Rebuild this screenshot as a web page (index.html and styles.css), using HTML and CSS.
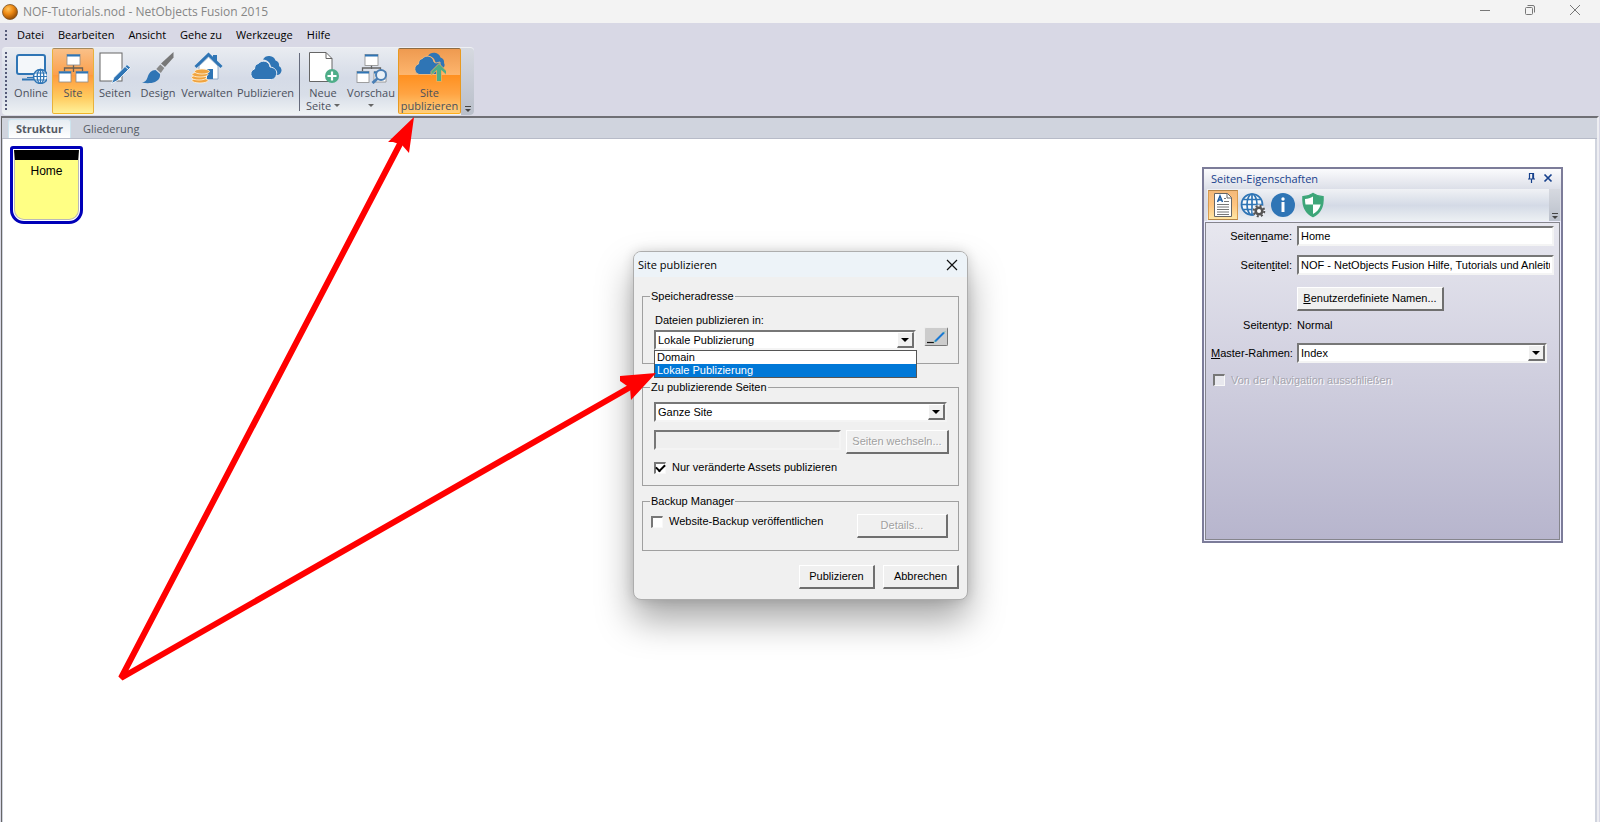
FILE: index.html
```html
<!DOCTYPE html>
<html lang="de">
<head>
<meta charset="utf-8">
<title>NOF-Tutorials.nod - NetObjects Fusion 2015</title>
<link rel="stylesheet" href="styles.css">
</head>
<body>
<div class="app">
  <header class="titlebar">
    <svg class="app-icon" width="16" height="16" viewBox="0 0 16 16"><defs><radialGradient id="orb" cx=".38" cy=".3" r=".75"><stop offset="0" stop-color="#ffc45c"/><stop offset=".45" stop-color="#ee8a14"/><stop offset="1" stop-color="#8a4300"/></radialGradient></defs><circle cx="8" cy="8" r="7.5" fill="url(#orb)" stroke="#7a5326" stroke-width=".8"/></svg>
    <h1 class="app-title">NOF-Tutorials.nod - NetObjects Fusion 2015</h1>
    <div class="window-controls">
      <button aria-label="Minimieren"><svg width="12" height="12" viewBox="0 0 12 12"><path d="M1 6.5h10"/></svg></button>
      <button aria-label="Wiederherstellen"><svg width="12" height="12" viewBox="0 0 12 12"><rect x="1.5" y="3.5" width="7" height="7" rx="1"/><path d="M3.500 1.500h5.500a1.500 1.500 0 0 1 1.500 1.500v5.500"/></svg></button>
      <button aria-label="Schließen"><svg width="12" height="12" viewBox="0 0 12 12"><path d="M1 1l10 10M11 1L1 11"/></svg></button>
    </div>
  </header>

  <nav class="menubar">
    <span class="grip grip-short"></span>
    <button>Datei</button><button>Bearbeiten</button><button>Ansicht</button><button>Gehe zu</button><button>Werkzeuge</button><button>Hilfe</button>
  </nav>

  <div class="toolbar">
    <span class="grip"></span>
    <button class="tool w-s">
      <svg width="32" height="32" viewBox="0 0 32 32"><rect x="2" y="3" width="28" height="19" rx="2" fill="#f4f7fa" stroke="#2f75b5" stroke-width="2"/><path d="M7 27.500h12" stroke="#2f75b5" stroke-width="2"/><path d="M12 25.500h8" stroke="#2f75b5" stroke-width="1"/><circle cx="25.500" cy="24.500" r="7" fill="#fff" stroke="#2f75b5" stroke-width="1.400"/><ellipse cx="25.500" cy="24.500" rx="3.300" ry="7" fill="none" stroke="#2f75b5" stroke-width="1.300"/><path d="M25.500 17.500v14M18.500 24.500h14M19.500 21h12M19.500 28h12" stroke="#2f75b5" stroke-width="1.200"/></svg>
      <span>Online</span></button>
    <button class="tool w-s active">
      <svg width="32" height="32" viewBox="0 0 32 32"><path d="M16.500 13v7M7.500 20v-4h18v4" fill="none" stroke="#6a6054" stroke-width="1.300"/><g fill="#fff" stroke="#8b8b8b" stroke-width=".8"><rect x="10" y="2.500" width="13" height="10.500"/><rect x="2" y="19.500" width="12" height="10.500"/><rect x="19" y="19.500" width="12" height="10.500"/></g><path d="M10 3.500h13M2 20.500h12M19 20.500h12" stroke="#2f75b5" stroke-width="2.200"/></svg>
      <span>Site</span></button>
    <button class="tool w-s">
      <svg width="32" height="32" viewBox="0 0 32 32"><rect x="1" y="1" width="22" height="28" fill="#fff" stroke="#666" stroke-width="1"/><path d="M12.500 31.500l2.500-6L28 12.500l3.500 3L18.500 28.500z" fill="#2f75b5" stroke="#fff" stroke-width=".8"/><path d="M26 14.500l3.500 3" stroke="#fff" stroke-width=".9"/></svg>
      <span>Seiten</span></button>
    <button class="tool w-m">
      <svg width="32" height="32" viewBox="0 0 32 32"><path d="M31.500 0v5.500L23 15l-4-3.500z" fill="#777"/><path d="M18.300 12.500l4 3.500-3.500 5-4.500-4z" fill="#888"/><path d="M13.500 18l4.500 4c.5 3.500-1.500 6.500-5 8-4 1.500-9 1.500-13 .5 3-.5 4.500-2 5.500-5 1.200-4.500 4-7.500 8-7.500z" fill="#2f75b5"/></svg>
      <span>Design</span></button>
    <button class="tool w-l">
      <svg width="32" height="32" viewBox="0 0 32 32"><path d="M22 3h4v8l-4-4z" fill="#2f75b5"/><path d="M8 14v13h19V14l-9.500-9z" fill="#fff" stroke="#7b9cc0" stroke-width=".8"/><path d="M4.500 15L17.500 2.500l13 12.500" fill="none" stroke="#2f75b5" stroke-width="3"/><path d="M16 17h6v10h-6z" fill="#2f75b5"/><g fill="#f0a440" stroke="#fff4df" stroke-width=".8"><ellipse cx="9" cy="28.500" rx="8" ry="2.500"/><ellipse cx="8" cy="25.500" rx="7.500" ry="2.500"/><ellipse cx="9" cy="22.500" rx="8" ry="2.500"/><ellipse cx="11" cy="19.500" rx="7.500" ry="2.500"/></g></svg>
      <span>Verwalten</span></button>
    <button class="tool w-xl">
      <svg width="32" height="32" viewBox="0 0 32 32"><path d="M27 23a4.800 4.800 0 0 0 2-9 5 5 0 0 0-3.500-5.500A7 7 0 0 0 13 7.500c5 .5 7.500 3.500 8 7.500 3.500 1 4.500 4.500 4 8z" fill="#2f75b5"/><path d="M5 27.500a5.500 5.500 0 0 1-.5-10.500c0-3 1.500-5 4-5.500 3-4 11-3 11.500 3.500 5 .5 7.500 4 6.500 7.500-.5 3-2.500 5-5 5z" fill="#2f75b5" stroke="#e8edf4" stroke-width="1"/></svg>
      <span>Publizieren</span></button>
    <span class="divider"></span>
    <button class="tool w-s">
      <svg width="32" height="32" viewBox="0 0 32 32"><path d="M2.500.5H19l6 6v23H2.500z" fill="#fff" stroke="#666"/><path d="M19 .5v6h6" fill="none" stroke="#666"/><circle cx="25" cy="24" r="7" fill="#4ead88"/><path d="M20.500 24h9M25 19.500v9" stroke="#fff" stroke-width="2.200"/></svg>
      <span>Neue<br>Seite <i class="caret"></i></span></button>
    <button class="tool w-l">
      <svg width="32" height="32" viewBox="0 0 32 32"><path d="M16.500 13v4M7.500 19v-3h18v3" fill="none" stroke="#666" stroke-width="1.300"/><g fill="#fff" stroke="#8b8b8b" stroke-width=".8"><rect x="10" y="2.500" width="13" height="11"/><rect x="2" y="19.500" width="12" height="11"/><path d="M19 30V19.500h12V30z"/></g><path d="M10 3.500h13M2 20.500h12M19 20.500h12" stroke="#2f75b5" stroke-width="2.200"/><circle cx="26" cy="23" r="5" fill="#eaf1f8" stroke="#4b7fb5" stroke-width="2"/><path d="M22.500 26.500l-5 4.500" stroke="#4b7fb5" stroke-width="3"/></svg>
      <span>Vorschau<br><i class="caret"></i></span></button>
    <button class="tool w-xl active hot">
      <svg width="32" height="32" viewBox="0 0 32 32"><path d="M27 17a4 4 0 0 0 3-6 5 5 0 0 0-3.500-5.500A7 7 0 0 0 14 4c4.500 0 7 3 7.500 7z" fill="#2f75b5"/><path d="M5 22.500A5.500 5.500 0 0 1 4.500 12c0-3 1.500-5 4-5.500 3-4 10.500-3 11.500 3.500l2 1 4-1v12.500z" fill="#2f75b5" stroke="#ffc27f" stroke-width=".8"/><path d="M17 19.500l8-8 8 8v4l-5.500-5V29.500h-5V18.500l-5.500 5z" fill="#4ead88" stroke="#ffad55" stroke-width=".8"/></svg>
      <span>Site<br>publizieren</span></button>
    <button class="overflow" aria-label="Symbolleistenoptionen"><svg width="8" height="8" viewBox="0 0 8 8"><path d="M1 1.500h6" stroke="#444"/><path d="M1 4h6L4 7z" fill="#444"/></svg></button>
  </div>

  <main class="workspace">
    <div class="tabs" role="tablist">
      <button role="tab" aria-selected="true" class="tab selected">Struktur</button>
      <button role="tab" aria-selected="false" class="tab">Gliederung</button>
    </div>
    <div class="canvas">
      <div class="node"><div class="node-body">Home</div></div>
    </div>
  </main>

  <section class="panel">
    <header class="panel-title">
      <h2>Seiten-Eigenschaften</h2>
      <button aria-label="Anheften"><svg width="9" height="10" viewBox="0 0 9 10"><path d="M2.500 5.500v-5h4v5M1 6h7M4.500 6v4M5.800 1v5" fill="none" stroke="#17418c" stroke-width="1.200"/></svg></button>
      <button aria-label="Schließen"><svg width="10" height="10" viewBox="0 0 10 10"><path d="M1.500 1.500l7 7M8.500 1.500l-7 7" stroke="#17418c" stroke-width="1.700"/></svg></button>
    </header>
    <div class="panel-tools">
      <button class="ptool active" aria-label="Seite"><svg width="24" height="26" viewBox="0 0 24 26"><path d="M3.500 1.500h13l4 4v19h-17z" fill="#fff" stroke="#666"/><path d="M16 1.500v4.500h4.500" fill="none" stroke="#666"/><path d="M6.500 10L9 4l2.500 6M7.500 8h3" fill="none" stroke="#1f5c9f" stroke-width="1.500"/><path d="M13 6.500h2M13 9.500h5M6 12.500h12M6 15h12M6 17.500h12M6 20h12M6 22.500h12" stroke="#777"/></svg></button>
      <button class="ptool" aria-label="Web"><svg width="26" height="26" viewBox="0 0 26 26"><g fill="none" stroke="#2f75b5" stroke-width="1.700"><circle cx="12" cy="12.500" r="10.500" fill="#f8fafc"/><ellipse cx="12" cy="12.500" rx="5" ry="10.500"/><path d="M12 2v21M1.500 12.500h21M3.500 7.500h17M3.500 17.500h17"/></g><circle cx="19" cy="19" r="6.500" fill="#edf1f7"/><circle cx="19" cy="19" r="3.300" fill="#fff" stroke="#555" stroke-width="2.600"/><circle cx="19" cy="19" r="5.300" fill="none" stroke="#555" stroke-width="2" stroke-dasharray="2.080 2.080"/></svg></button>
      <button class="ptool" aria-label="Info"><svg width="26" height="26" viewBox="0 0 26 26"><circle cx="13" cy="13" r="12" fill="#2f75b5"/><circle cx="13" cy="7" r="1.700" fill="#fff"/><path d="M13 10v10" stroke="#fff" stroke-width="3"/></svg></button>
      <button class="ptool" aria-label="Sicherheit"><svg width="26" height="26" viewBox="0 0 26 26"><path d="M13 1.500c3 2 6.500 3 10 3.300C23.500 14 20.500 21 13 24.500 5.500 21 2.500 14 3 4.800 6.500 4.500 10 3.500 13 1.500z" fill="#3da679" stroke="#3da679" stroke-width="1.500"/><path d="M13 4.500v8H5.500c-.4-2-.5-3.500-.5-5.500C8 6.800 10.500 6 13 4.500zM13 12.500h7.700c-1.200 4.500-3.800 7.500-7.700 9.500z" fill="#fff"/></svg></button>
      <span class="overflow panel-overflow"><svg width="8" height="8" viewBox="0 0 8 8"><path d="M1 1.500h6" stroke="#444"/><path d="M1 4h6L4 7z" fill="#444"/></svg></span>
    </div>
    <form class="panel-body">
      <label for="pname">Seiten<u>n</u>ame:</label><input id="pname" class="field" type="text" value="Home">
      <label for="ptitle">Seiten<u>t</u>itel:</label><input id="ptitle" class="field" type="text" value="NOF - NetObjects Fusion Hilfe, Tutorials und Anleitungen">
      <button type="button" class="btn names"><span><u>B</u>enutzerdefiniete Namen...</span></button>
      <span class="key">Seitentyp:</span><span>Normal</span>
      <label for="master"><u>M</u>aster-Rahmen:</label>
      <div class="combo master"><select id="master"><option>Index</option></select><i class="drop"></i></div>
      <label class="check nav-check disabled"><input type="checkbox" disabled>Von der Navigation ausschließen</label>
    </form>
  </section>

  <section class="dialog" role="dialog" aria-labelledby="dlg">
    <header class="dialog-title"><h2 id="dlg">Site publizieren</h2>
      <button aria-label="Schließen"><svg width="12" height="12" viewBox="0 0 12 12"><path d="M1 1l10 10M11 1L1 11" stroke="#111" stroke-width="1.200"/></svg></button></header>
    <form class="dialog-body">
      <fieldset class="group address">
        <legend>Speicheradresse</legend>
        <label for="target">Dateien publizieren in:</label>
        <div class="row">
          <div class="combo target"><select id="target"><option>Domain</option><option selected>Lokale Publizierung</option></select><i class="drop"></i>
            <ul class="options" role="listbox"><li role="option">Domain</li><li role="option" aria-selected="true">Lokale Publizierung</li></ul></div>
          <button type="button" class="edit" aria-label="Bearbeiten"><svg width="22" height="16" viewBox="0 0 22 16"><path d="M2 13.500h7" stroke="#111" stroke-width="1.200"/><path d="M10 12.500l9-9" stroke="#1878d4" stroke-width="2"/><path d="M9 13.500l2-2M18.500 4l1.500-1.500" stroke="#4ab3a5"/></svg></button>
        </div>
      </fieldset>
      <fieldset class="group pages">
        <legend>Zu publizierende Seiten</legend>
        <div class="combo"><select aria-label="Zu publizierende Seiten"><option>Ganze Site</option></select><i class="drop"></i></div>
        <div class="row switch"><input class="field" type="text" disabled aria-label="Seiten"><button type="button" class="btn" disabled>Seiten wechseln...</button></div>
        <label class="check"><input type="checkbox" checked>Nur veränderte Assets publizieren</label>
      </fieldset>
      <fieldset class="group backup">
        <legend>Backup Manager</legend>
        <div class="row">
        <label class="check"><input type="checkbox">Website-Backup veröffentlichen</label>
        <button type="button" class="btn details" disabled>Details...</button></div>
      </fieldset>
      <div class="actions"><button type="button" class="btn">Publizieren</button><button type="button" class="btn">Abbrechen</button></div>
    </form>
  </section>

  <svg class="arrows" width="1600" height="822" viewBox="0 0 1600 822"><path d="M401 142L121 678L634 385" fill="none" stroke="#f00" stroke-width="6" stroke-linejoin="bevel"/><path d="M414 117L409 153L402 145L393 142L388 142zM656 373L631 400L630 388L620 381L620 376z" fill="#f00"/></svg>
</div>
</body>
</html>
```

FILE: styles.css
```css
* { box-sizing: border-box; }
body { margin: 0; }
button { font: inherit; color: inherit; background: none; border: 0; padding: 0; margin: 0; }
h1, h2 { margin: 0; font-weight: 400; }
svg { display: block; flex: none; }

.app {
  position: relative;
  display: flex;
  flex-direction: column;
  height: 100vh;
  overflow: hidden;
  background: #d8d8e5;
  color: #000;
  font: 11px/13px "Liberation Sans", Arial, sans-serif;
}

/* Title bar and menu */
.titlebar { display: flex; align-items: center; height: 23px; padding-left: 2px; background: #f3f3f3; }
.app-title { flex: 1; margin-left: 5px; color: #868686; font: 12px/16px "Open Sans", sans-serif; }
.window-controls { display: flex; align-self: flex-start; }
.window-controls button { width: 45px; height: 20px; display: grid; place-items: center; }
.window-controls button:last-child { margin-right: 3px; }
.window-controls svg { fill: none; stroke: #777; }
.menubar { display: flex; align-items: center; height: 24px; padding-left: 5px; font: 11px/16px "Open Sans", sans-serif; }
.menubar button { margin-right: 14px; white-space: nowrap; }
.grip { width: 2px; height: 60px; background: repeating-linear-gradient(#555a78 0 2px, transparent 2px 4px); flex: none; margin-right: 3px; }
.grip-short { height: 10px; margin-right: 10px; }

/* Main toolbar */
.toolbar {
  display: flex;
  align-items: center;
  align-self: flex-start;
  height: 68px;
  margin-left: 2px;
  padding-left: 3px;
  background: linear-gradient(#e9ecf1, #d5dbe7 45%, #d8dee8 70%, #f0f3f5);
  border-top: 1px solid #eef0f4;
  border-radius: 4px;
}
.tool {
  display: flex;
  flex-direction: column;
  align-items: center;
  align-self: stretch;
  margin: 0 0 1px;
  padding-top: 3px;
  border: 1px solid transparent;
  border-radius: 2px;
  color: #4b505c;
  font: 11px/13px "Open Sans", sans-serif;
  white-space: nowrap;
}
.tool span { margin-top: 2px; }
.w-s { width: 42px; }
.w-m { width: 44px; }
.w-l { width: 54px; }
.w-xl { width: 63px; }
.active { background: linear-gradient(#f9c088, #fca04c 40%, #ff9a3d 41%, #ffca5e 75%, #fff29a); border-color: #a58a5d #e8b23c #f0b428; }
.hot { background: linear-gradient(#ee9a50, #fdb56d 40%, #ff9020 41%, #ffa443 70%, #ffcf7c); border-color: #8d6c45 #e89a20 #ffae1c; }
.divider { width: 1px; height: 58px; margin: 0 2px; background: #666b7c; }
.caret { display: inline-block; border: 3px solid transparent; border-top-color: #666; border-bottom: 0; vertical-align: 3px; }
.overflow { align-self: stretch; display: flex; align-items: flex-end; justify-content: center; width: 13px; padding-bottom: 2px; background: linear-gradient(#d6d9e0, #b9bfca); border-radius: 0 4px 4px 0; }

/* Document area */
.workspace { flex: 1; display: flex; flex-direction: column; margin: 1px 1px 0 1px; background: #d0d4de; border: 1px solid #666; border-width: 2px 2px 0 1px; border-color: #6f6f75 #eeeef2 #666 #666; }
.tabs { display: flex; align-items: flex-end; height: 21px; padding-left: 6px; color: #555a64; font: 11px/18px "Open Sans", sans-serif; border-bottom: 1px solid #b7bbc8; }
.tab { padding: 0 12px; }
.selected { padding: 0 7px; background: linear-gradient(#e6ecf2, #fff); border: 1px solid #cde4ee; border-bottom: 0; border-radius: 3px 3px 0 0; font-weight: 700; }
.canvas { flex: 1; padding: 7px; margin: 0 2px 0 1px; background: #fff; }
.node { width: 73px; height: 78px; padding: 1px; border: 3px solid #0000b8; border-radius: 3px 3px 14px 14px; }
.node-body { height: 100%; border: 1px solid #b9b9b9; border-top: 10px solid #000; border-radius: 0 0 10px 10px; background: #ffff84; text-align: center; font: 12px/22px "Liberation Sans", sans-serif; }

/* Classic 3D controls */
.field { min-width: 0; height: 20px; padding: 0 2px; border: 2px solid; border-color: #777 #f4f4f4 #f4f4f4 #777; border-radius: 0; background: #fff; font: inherit; color: #000; }
.field:disabled { background: #efefef; }
.btn { height: 24px; background: #f0f0f0; border: 1px solid; border-width: 1px 2px 2px 1px; border-color: #fff #6f6f6f #6f6f6f #fff; }
.btn:disabled { color: #a0a0a0; text-shadow: 1px 1px #fff; }
.combo { position: relative; height: 20px; border: 2px solid; border-color: #777 #f4f4f4 #f4f4f4 #777; background: #fff; }
.combo select { appearance: none; width: 100%; height: 100%; display: block; border: 0; padding: 0 2px; background: transparent; font: inherit; color: #000; }
.drop { position: absolute; top: 0; right: 0; bottom: 0; width: 17px; background: #f0f0f0; border: 1px solid; border-width: 1px 2px 2px 1px; border-color: #fff #707070 #707070 #fff; display: grid; place-items: center; pointer-events: none; }
.drop::after { content: ""; border: 4px solid transparent; border-top-color: #000; border-bottom: 0; }
.check { display: flex; align-items: center; gap: 6px; height: 13px; white-space: nowrap; }
.check input { appearance: none; width: 12px; height: 12px; margin: 0; background: #fff; border: 1px solid; border-width: 2px 1px 1px 2px; border-color: #777 #f8f8f8 #f8f8f8 #777; display: grid; place-items: center; }
.check input:checked::after { content: ""; width: 7px; height: 4px; border: solid #000; border-width: 0 0 2px 2px; transform: rotate(-45deg); margin-bottom: 3px; }
.disabled { color: #a5a5ae; text-shadow: 1px 1px #fff; }
.disabled input { background: #e8e8ee; }
.row { display: flex; }

/* Page properties */
.panel { position: absolute; left: 1202px; top: 167px; width: 361px; height: 376px; display: flex; flex-direction: column; border: 2px solid #7c7c99; background: #dcdde6; }
.panel-title { display: flex; align-items: center; gap: 7px; height: 20px; padding: 0 8px 2px 7px; background: linear-gradient(#fbfbfd, #dcdfe8); color: #17418c; font: 11px/18px "Open Sans", sans-serif; }
.panel-title h2 { flex: 1; font-size: 11px; padding-top: 2px; }
.panel-tools { display: flex; align-items: center; height: 33px; margin: 0 1px 0 3px; padding-left: 1px; background: linear-gradient(#f0f2f5, #d4dae6 50%, #eef2f4); }
.ptool { width: 30px; height: 30px; margin-bottom: 2px; display: grid; place-items: center; border: 1px solid transparent; }
.ptool.active { background: linear-gradient(#f4b97a, #ffc581 50%, #ffe6a4); border-color: #b48346 #d89b50; }
.panel-overflow { margin-left: auto; width: 11px; border-radius: 0; }
.panel-body { flex: 1; display: grid; grid-template-columns: 81px 257px; grid-template-rows: 20px 30px 30px 14px 34px 12px; align-content: start; align-items: center; column-gap: 5px; row-gap: 4px; margin: 0 1px 1px; padding: 3px 1px 0 5px; border: 1px solid #85858c; outline: 1px solid #eef; background: linear-gradient(#e7e7ef, #b7b5cd); }
.panel-body > label:not(.check), .key { text-align: right; white-space: nowrap; }
.names { grid-column: 2; width: 147px; }
.master { width: 250px; }
.nav-check { grid-column: 1 / -1; padding-left: 2px; }

/* Publish dialog */
.dialog { position: absolute; left: 633px; top: 251px; width: 335px; height: 349px; border: 1px solid #adadad; border-radius: 8px; background: #f0f0f0; box-shadow: 0 20px 36px rgba(0, 0, 0, .35), 0 0 12px rgba(0, 0, 0, .14); }
.dialog-title { display: flex; align-items: center; justify-content: space-between; height: 25px; padding: 0 9px 0 4px; border-radius: 7px 7px 0 0; background: #edf3f8; }
.dialog-title h2 { font: 11px/16px "Open Sans", sans-serif; }
.dialog-body { display: flex; flex-direction: column; padding: 13px 8px 0 8px; }
.group { min-width: 0; margin: 0; border: 1px solid #a0a0a0; padding: 0 9px 0 11px; }
.group legend { margin-left: -4px; padding: 0 1px; line-height: 13px; }
.address { height: 74px; padding-top: 11px; }
.address > label { display: block; height: 16px; padding-left: 1px; }
.target { width: 262px; margin-right: 8px; }
.edit { width: 24px; height: 19px; margin-top: -3px; background: #ccc; border: 1px solid #777; border-top-color: #eee; border-left-color: #eee; border-radius: 2px; }
.options { position: absolute; z-index: 1; left: -2px; right: -3px; top: 18px; margin: 0; padding: 0; list-style: none; border: 1px solid #555; background: #fff; }
.options li { padding-left: 2px; line-height: 13px; }
.options [aria-selected] { background: #0078d7; color: #fff; }
.pages { height: 105px; margin-top: 17px; padding-top: 8px; }
.pages .combo { width: 293px; }
.switch { margin: 8px 0 7px; gap: 5px; }
.switch .field { flex: 1; }
.switch .btn { width: 103px; }
.backup { height: 56px; margin-top: 9px; padding: 6px 10px 0 8px; }
.backup legend { margin-left: -1px; }
.backup .row { justify-content: space-between; }
.backup .check { margin-top: 1px; }
.details { width: 91px; }
.actions { display: flex; justify-content: flex-end; gap: 8px; margin-top: 14px; }
.actions .btn { width: 76px; }

.arrows { position: absolute; left: 0; top: 0; pointer-events: none; z-index: 5; }
```
